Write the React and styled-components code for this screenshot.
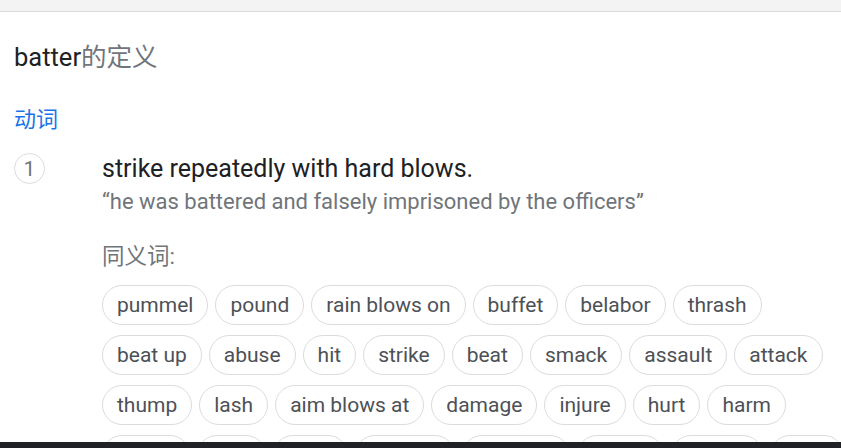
import React from "react";
import styled, { createGlobalStyle } from "styled-components";

const GlobalStyle = createGlobalStyle`
  html, body {
    margin: 0;
    padding: 0;
    height: 100%;
    overflow: hidden;
    background: #ffffff;
    font-family: Roboto, "Noto Sans CJK SC", "Noto Sans", sans-serif;
  }
  #root { height: 100%; }
`;

const Page = styled.div`
  display: flex;
  flex-direction: column;
  height: 100vh;
`;

const TopBar = styled.div`
  flex: none;
  height: 11px;
  background: #f3f3f3;
  border-bottom: 1px solid #dadce0;
`;

const Main = styled.main`
  flex: 1;
  min-height: 0;
  overflow: hidden;
  padding: 29px 0 0 14px;
`;

const BottomBar = styled.div`
  flex: none;
  height: 6px;
  background: #202124;
`;

const Title = styled.h1`
  margin: 0;
  font-size: 25.5px;
  line-height: 33px;
  font-weight: 400;
  color: #202124;
`;

const TitleSuffix = styled.span`
  color: #70757a;
`;

const PartOfSpeech = styled.div`
  margin-top: 32px;
  font-size: 22px;
  line-height: 28px;
  color: #1a73e8;
`;

const Sense = styled.div`
  margin-top: 19px;
  display: grid;
  grid-template-columns: 88px 1fr;
  align-items: start;
`;

const SenseNumber = styled.div`
  box-sizing: border-box;
  width: 31px;
  height: 31px;
  border: 1px solid #dadce0;
  border-radius: 50%;
  display: flex;
  align-items: center;
  justify-content: center;
  font-size: 21px;
  color: #70757a;
`;

const SenseBody = styled.div`
  display: flex;
  flex-direction: column;
`;

const Definition = styled.div`
  font-size: 25px;
  line-height: 32px;
  color: #202124;
`;

const Example = styled.div`
  margin-top: 2px;
  font-size: 22px;
  line-height: 30px;
  color: #70757a;
`;

const SynLabel = styled.div`
  margin-top: 25px;
  font-size: 22.5px;
  line-height: 29px;
  color: #70757a;
`;

const Chips = styled.div`
  margin-top: 14px;
  width: 760px;
  display: flex;
  flex-wrap: wrap;
  gap: 10px 7px;
`;

const Chip = styled.span`
  box-sizing: border-box;
  height: 40px;
  padding: 0 14px;
  border: 1px solid #dadce0;
  border-radius: 20px;
  display: inline-flex;
  align-items: center;
  font-size: 21px;
  color: #4d5156;
  white-space: nowrap;
`;

const synonyms = [
  "pummel", "pound", "rain blows on", "buffet", "belabor", "thrash",
  "beat up", "abuse", "hit", "strike", "beat", "smack", "assault", "attack",
  "thump", "lash", "aim blows at", "damage", "injure", "hurt", "harm",
  "bruise", "slap", "bash", "clobber", "mistreat", "punch", "wallop", "sock",
];

export default function App() {
  return (
    <>
      <GlobalStyle />
      <Page>
        <TopBar />
        <Main>
          <Title>
            batter<TitleSuffix>的定义</TitleSuffix>
          </Title>
          <PartOfSpeech>动词</PartOfSpeech>
          <Sense>
            <SenseNumber>1</SenseNumber>
            <SenseBody>
              <Definition>strike repeatedly with hard blows.</Definition>
              <Example>“he was battered and falsely imprisoned by the officers”</Example>
              <SynLabel>同义词:</SynLabel>
              <Chips>
                {synonyms.map((s) => (
                  <Chip key={s}>{s}</Chip>
                ))}
              </Chips>
            </SenseBody>
          </Sense>
        </Main>
        <BottomBar />
      </Page>
    </>
  );
}
